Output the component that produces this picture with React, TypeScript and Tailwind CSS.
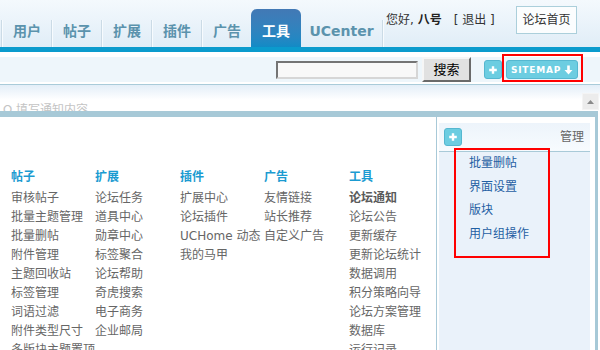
import React from 'react';

const Plus = ({ s = 10 }: { s?: number }) => (
  <svg width={s} height={s} viewBox="0 0 10 10">
    <path d="M5 1.2v7.6M1.2 5h7.6" stroke="#fff" strokeWidth="2.4" />
  </svg>
);

const DownArrow = () => (
  <svg width="9" height="10" viewBox="0 0 9 10">
    <path d="M3.2 0.5h2.6v4.5h2.7L4.5 9.5 0.5 5h2.7z" fill="#fff" />
  </svg>
);

const Sep = () => <div className="w-[2px] h-[27px] border-l border-[#cbdbe6] bg-[#f7fbfe]" />;

const cols: { t: string; items: { x: string; b?: boolean }[] }[] = [
  {
    t: '帖子',
    items: ['审核帖子', '批量主题管理', '批量删帖', '附件管理', '主题回收站', '标签管理', '词语过滤', '附件类型尺寸', '多版块主题置顶'].map((x) => ({ x })),
  },
  {
    t: '扩展',
    items: ['论坛任务', '道具中心', '勋章中心', '标签聚合', '论坛帮助', '奇虎搜索', '电子商务', '企业邮局'].map((x) => ({ x })),
  },
  {
    t: '插件',
    items: ['扩展中心', '论坛插件', 'UCHome 动态', '我的马甲'].map((x) => ({ x })),
  },
  {
    t: '广告',
    items: ['友情链接', '站长推荐', '自定义广告'].map((x) => ({ x })),
  },
  {
    t: '工具',
    items: [
      { x: '论坛通知', b: true },
      ...['论坛公告', '更新缓存', '更新论坛统计', '数据调用', '积分策略向导', '论坛方案管理', '数据库', '运行记录'].map((x) => ({ x })),
    ],
  },
];

export default function App() {
  const tabs = ['用户', '帖子', '扩展', '插件', '广告'];
  return (
    <div className="relative w-[600px] h-[350px] overflow-hidden bg-white font-['DejaVu_Sans','Noto_Sans_CJK_SC',sans-serif]">
      {/* header */}
      <header className="h-[47px] flex bg-gradient-to-b from-[#f4f9fd] to-[#e0edf7]">
        <nav className="flex items-end pl-[1px]">
          {tabs.map((t) => (
            <div key={t} className="flex items-end">
              <Sep />
              <div className="w-[48px] h-[38px] pt-[14px] text-center text-[14px] leading-[16px] font-bold text-[#5b93ad]">{t}</div>
            </div>
          ))}
          <div className="w-[50px] h-[38px] pt-[14px] text-center text-[14px] leading-[16px] font-bold text-white rounded-t-[6px] bg-gradient-to-b from-[#4279b5] to-[#118bc6]">
            工具
          </div>
          <div className="w-[81px] h-[38px] pt-[14px] text-center text-[14px] leading-[16px] font-bold text-[#5b93ad]">UCenter</div>
          <Sep />
        </nav>
        <div className="flex-1 flex items-center h-[28px] mt-[6px] pl-[2px] pr-[23px]">
          <span className="text-[12px] leading-[16px] text-[#333]">
            您好, <b className="text-[#222]">八号</b>
            <span className="ml-[12px]">[ 退出 ]</span>
          </span>
          <div className="ml-auto h-[28px] w-[61px] border border-[#abcfdb] bg-[#fbfdfe] flex items-center justify-center text-[12px] text-[#333]">
            论坛首页
          </div>
        </div>
      </header>
      <div className="h-[5px] bg-[#0b9bcd]" />
      <div className="h-[5px]" />
      {/* toolbar */}
      <div className="h-[25px] bg-[#eef6fb] flex items-center justify-end pr-[22px]">
        <div className="w-[142px] h-[18px] border-2 border-[#d6d6d6] border-t-[#747474] border-l-[#747474] bg-[#f8f8f8]" />
        <div className="ml-[4px] w-[49px] h-[25px] bg-[#e1e1e1] border-2 border-[#f6f6f6] border-b-[#6a6a6a] border-r-[#6a6a6a] flex items-center justify-center text-[13px] text-black">
          搜索
        </div>
        <div className="ml-[13px] w-[18px] h-[19px] rounded-[3px] bg-[#6ccde1] border border-[#55b7d0] flex items-center justify-center">
          <Plus />
        </div>
        <div className="ml-[4px] w-[72px] h-[19px] rounded-[3px] bg-[#6ccde1] border border-[#55b7d0] flex items-center justify-center gap-[3px] text-white text-[9px] leading-[10px] font-bold tracking-[0.8px]">
          SITEMAP
          <DownArrow />
        </div>
      </div>
      <div className="h-[2px]" />
      <div className="h-px bg-[#a9cbd9]" />
      <div className="relative h-[26px] overflow-hidden bg-[linear-gradient(to_bottom,#e3eef8,#ffffff_15px)]">
        <div className="pt-[19px] pl-[3px] text-[12px] leading-[12px] text-[#c4c4c4]">Ω 填写通知内容</div>
        <div className="absolute right-[1px] top-[8px] w-[17px] h-[17px] bg-[#ececec] border border-[#f4f4f4] flex items-center justify-center">
          <svg width="7" height="4" viewBox="0 0 7 4">
            <path d="M0 4L3.5 0 7 4z" fill="#8a8a8a" />
          </svg>
        </div>
      </div>
      {/* main frame */}
      <div className="w-[598px] h-[239px] border-t-[6px] border-r-[3px] border-[#a7c9d7] flex">
        <main className="w-[436px] pt-[51px] pl-[11px] grid grid-cols-[84px_85px_84px_85px_1fr] content-start">
          {cols.map((c) => (
            <div key={c.t} className="text-[12px] leading-[19px]">
              <div className="font-bold text-[#1b9bd1] mb-[2px]">{c.t}</div>
              {c.items.map((i) => (
                <div key={i.x} className={i.b ? 'font-bold text-[#5a5a5a] whitespace-nowrap' : 'text-[#666] whitespace-nowrap'}>
                  {i.x}
                </div>
              ))}
            </div>
          ))}
        </main>
        <aside className="flex-1 border-l border-[#a8c9d8] pl-[2px] pt-[6px] pr-[5px]">
          <div className="h-full bg-[#eaf2fa]">
            <div className="h-[29px] border-b border-[#a9cad8] bg-gradient-to-b from-[#edf4fb] to-[#f7fbfe] flex items-center justify-between pl-[5px] pr-[6px]">
              <div className="w-[18px] h-[18px] rounded-[3px] bg-[#6ccde1] border border-[#55b7d0] flex items-center justify-center">
                <Plus />
              </div>
              <span className="text-[12px] text-[#666]">管理</span>
            </div>
            <ul className="pl-[30px] text-[12px] leading-[23.6px] text-[#1f5fa3]">
              <li>批量删帖</li>
              <li>界面设置</li>
              <li>版块</li>
              <li>用户组操作</li>
            </ul>
          </div>
        </aside>
      </div>
      {/* red annotation boxes */}
      <div className="absolute left-[502px] top-[54px] w-[81px] h-[28px] border-2 border-[#ff0000]" />
      <div className="absolute left-[454px] top-[148px] w-[96px] h-[110px] border-2 border-[#ff0000]" />
    </div>
  );
}
